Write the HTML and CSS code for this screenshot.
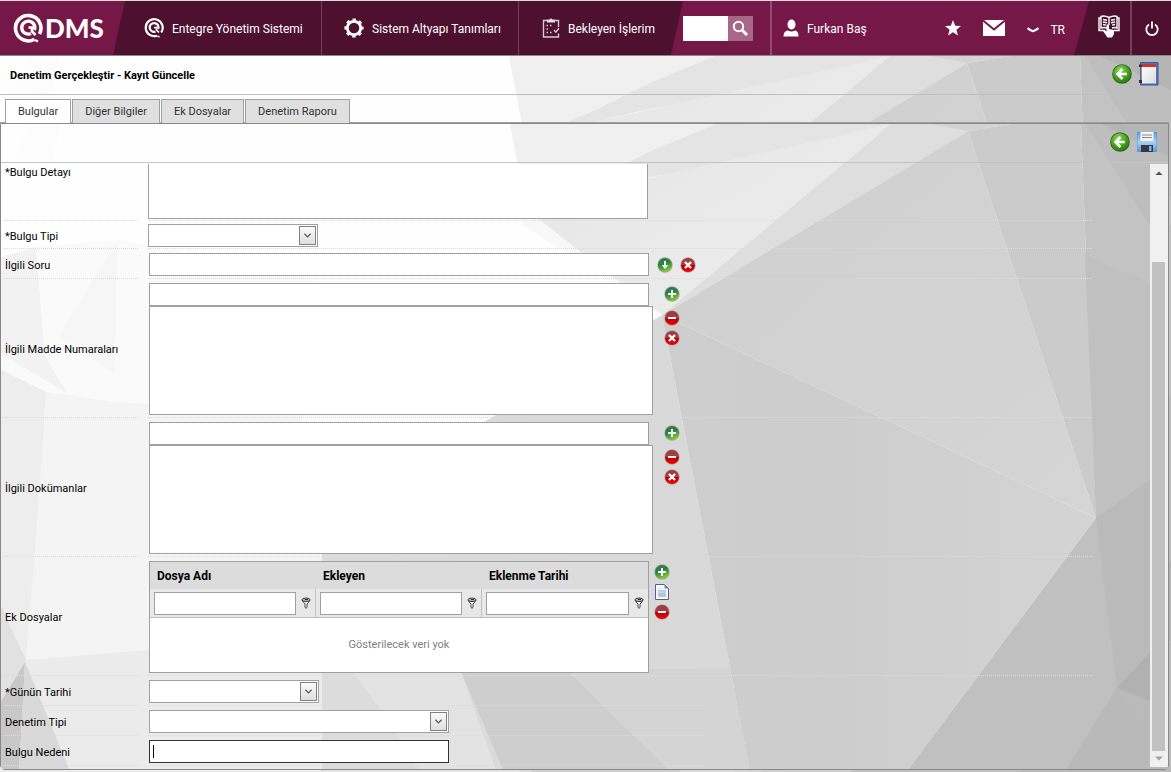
FILE: index.html
```html
<!DOCTYPE html>
<html lang="tr">
<head>
<meta charset="utf-8">
<title>QDMS - Denetim Gerçekleştir</title>
<link rel="stylesheet" href="styles.css">
</head>
<body>
<svg class="defs" width="0" height="0" aria-hidden="true">
  <defs>
    <linearGradient id="gGreen" x1="0" y1="0" x2="0.4" y2="1"><stop offset="0" stop-color="#2f7d55"/><stop offset=".5" stop-color="#2c8040"/><stop offset="1" stop-color="#7cc832"/></linearGradient>
    <linearGradient id="gRed" x1="0" y1="0" x2="0" y2="1"><stop offset="0" stop-color="#9c3a40"/><stop offset=".48" stop-color="#ae3a3e"/><stop offset=".52" stop-color="#b80008"/><stop offset="1" stop-color="#f80000"/></linearGradient>
    <radialGradient id="gBack" cx=".4" cy=".3" r=".8"><stop offset="0" stop-color="#93d860"/><stop offset=".5" stop-color="#4aa81f"/><stop offset="1" stop-color="#236b0c"/></radialGradient>
    <linearGradient id="gDisk" x1="0" y1="0" x2="0" y2="1"><stop offset="0" stop-color="#5c9bdc"/><stop offset=".5" stop-color="#a5d2f5"/><stop offset="1" stop-color="#5a97d6"/></linearGradient>
    <linearGradient id="gPaper" x1="0" y1="0" x2="1" y2="1"><stop offset="0" stop-color="#ffffff"/><stop offset="1" stop-color="#dcdcdc"/></linearGradient>
    <linearGradient id="gMid" x1="0" y1="0" x2="1" y2="1"><stop offset="0" stop-color="#e6e6e6"/><stop offset="1" stop-color="#ededed"/></linearGradient>
    <linearGradient id="gBig" x1="0" y1="0" x2="1" y2="1"><stop offset="0" stop-color="#cfcfcf"/><stop offset="1" stop-color="#d5d5d5"/></linearGradient>
    <linearGradient id="gLow" x1="0" y1="0" x2="1" y2="0"><stop offset="0" stop-color="#dcdcdc"/><stop offset="1" stop-color="#d8d8d8"/></linearGradient>
    <linearGradient id="gDeep" x1="0" y1="0" x2="1" y2="0"><stop offset="0" stop-color="#cecece"/><stop offset=".4" stop-color="#cdcdcd"/><stop offset="1" stop-color="#d4d4d4"/></linearGradient>
  </defs>
  <symbol id="facets" viewBox="0 0 1171 716" preserveAspectRatio="none">
    <rect width="1171" height="716" fill="#fefefe"/>
    <polygon points="60,0 50,40 12,38 30,0" fill="#fcfcfc"/>
    <polygon points="0,148 35,123 116,116 300,150 560,300 560,716 0,716" fill="#fafafa"/>
    <polygon points="0,133 35,123 44,232 66,269 0,230" fill="#f2f2f2"/>
    <polygon points="35,123 60,176 110,205 60,232 44,232" fill="#fafafa"/>
    <polygon points="116,117 58,212 114,250" fill="#f6f6f6"/>
    <polygon points="0,246 45,268 113,278 300,290 340,538 25,536 0,485" fill="#f4f4f4"/>
    <polygon points="0,246 45,268 36,400 25,536 0,482" fill="#ededed"/>
    <polygon points="25,536 160,525 330,510 330,716 0,716 0,560" fill="#ebebeb"/>
    <polygon points="0,482 25,536 0,580" fill="#e1e1e1"/>
    <polygon points="24,538 0,578 0,650 18,650" fill="#c8c8c8"/>
    <polygon points="24,538 18,650 70,650" fill="#d9d9d9"/>
    <polygon points="509,0 715,0 650,40 560,90 526,90" fill="#f0f0f0"/>
    <polygon points="715,0 890,0 890,10 650,53 540,78 600,52 650,27" fill="#e4e4e4"/>
    <polygon points="890,0 540,78 526,90 661,191" fill="url(#gMid)"/>
    <polygon points="526,86 661,191 520,100" fill="#f8f8f8"/>
    <polygon points="321,430 480,300 661,191 762,716 321,716" fill="url(#gLow)"/>
    <polygon points="321,545 350,545 459,545 520,716 321,716" fill="#e3e3e3"/>
    <polygon points="352,548 390,600 420,650 321,650 321,548" fill="#dcdcdc"/>
    <polygon points="459,545 565,545 670,648 680,716 532,716" fill="#cecece"/>
    <polygon points="565,545 729,545 762,716 735,716 670,648" fill="#d4d4d4"/>
    <polygon points="890,0 967,0 967,7 661,191" fill="#dedede"/>
    <polygon points="930,0 1010,0 967,7" fill="#d3d3d3"/>
    <polygon points="967,7 1095,394 661,191" fill="url(#gBig)"/>
    <polygon points="661,191 1095,394 905,648 850,716 762,716" fill="url(#gDeep)"/>
    <polygon points="967,7 1010,0 1080,0 1095,394" fill="#cbcbcb"/>
    <polygon points="1080,0 1171,0 1171,716 1095,394" fill="#c3c3c3"/>
    <polygon points="1085,0 1171,0 1171,140 1150,104" fill="#bebebe"/>
    <polygon points="1100,0 1171,0 1171,34" fill="#b5b5b5"/>
    <polygon points="1084,130 1171,170 1171,340 1095,394" fill="#c0c0c0"/>
    <polygon points="1095,394 1171,340 1171,716 1100,716" fill="#bababa"/>
    <polygon points="1095,394 1116,564 1060,716 850,716 905,648" fill="#c0c0c0"/>
    <polygon points="1116,564 1171,505 1171,585" fill="#b1b1b1"/>
    <polygon points="1116,564 1171,640 1171,716 1020,716" fill="#b9b9b9"/>
  </symbol>
  <symbol id="add" viewBox="0 0 16 16"><circle cx="8" cy="8" r="7.7" fill="#a9a9a9"/><circle cx="8" cy="8" r="7" fill="url(#gGreen)"/><path d="M8 4v8M4 8h8" stroke="#fff" stroke-width="2"/></symbol>
  <symbol id="down" viewBox="0 0 16 16"><circle cx="8" cy="8" r="7.7" fill="#a9a9a9"/><circle cx="8" cy="8" r="7" fill="url(#gGreen)"/><path d="M7 4h2v4h2.200L8 12 4.800 8H7z" fill="#fff"/></symbol>
  <symbol id="minus" viewBox="0 0 16 16"><circle cx="8" cy="8" r="7.7" fill="#a9a9a9"/><circle cx="8" cy="8" r="7" fill="url(#gRed)"/><path d="M4 8h8" stroke="#fff" stroke-width="2"/></symbol>
  <symbol id="cross" viewBox="0 0 16 16"><circle cx="8" cy="8" r="7.7" fill="#a9a9a9"/><circle cx="8" cy="8" r="7" fill="url(#gRed)"/><path d="M5 5l6 6M11 5l-6 6" stroke="#fff" stroke-width="2.400"/></symbol>
  <symbol id="back" viewBox="0 0 20 20"><circle cx="10" cy="10" r="9.800" fill="#2d5f1c"/><circle cx="10" cy="10" r="9" fill="url(#gBack)"/><path d="M15 10H7M10.500 5L5.500 10l5 5" fill="none" stroke="#fff" stroke-width="2.600"/></symbol>
  <symbol id="filter" viewBox="0 0 10 12"><path d="M1 3.500L4 7V10.500Q5 12 6 10.500V7L9 3.500" fill="#fff" stroke="#444"/><ellipse cx="5" cy="2.800" rx="4" ry="1.800" fill="#aaa" stroke="#444"/><path d="M4 2.500h3" stroke="#333"/></symbol>
  <symbol id="chev" viewBox="0 0 17 19"><path d="M5 7.500l3.500 3.500L12 7.500" fill="none" stroke="#555" stroke-width="1.300"/></symbol>
</svg>

<header class="topbar">
  <a class="brand" href="#" aria-label="QDMS">
    <svg width="31" height="31" viewBox="0 0 31 31" fill="none" stroke="#fff"><path d="M21.500 26.200A12.700 12.700 0 1 1 26.500 21" stroke-width="3.600"/><path d="M18 20.500A6.500 6.500 0 1 1 21.300 17" stroke-width="3.400"/><path d="M15.500 14.500h3.500v4l3.500 3.500" stroke-width="2.600"/><path d="M22 27l3 1.500" stroke-width="2.400"/></svg>
    <span>DMS</span>
  </a>
  <nav class="mainnav">
    <a href="#" class="nav-a">
      <svg width="20" height="20" viewBox="0 0 20 20" fill="none" stroke="#fff"><path d="M13 17.700A8.500 8.500 0 1 1 17.200 14.500" stroke-width="2.200"/><path d="M11.500 13.600A4.400 4.400 0 1 1 14.200 11" stroke-width="2.200"/><path d="M10 9.500h2.500v2.500l2.500 2.500" stroke-width="1.700"/><path d="M13.500 18l2 1" stroke-width="1.500"/></svg>
      Entegre Yönetim Sistemi</a>
    <a href="#" class="nav-b">
      <svg width="20" height="20" viewBox="0 0 20 20" fill="none" stroke="#fff"><circle cx="10" cy="10" r="6.700" stroke-width="2.800"/><circle cx="10" cy="10" r="8.600" stroke-width="2" stroke-dasharray="3.400 3.354" stroke-dashoffset="1.700"/></svg>
      Sistem Altyapı Tanımları</a>
    <a href="#" class="nav-c">
      <svg width="18" height="20" viewBox="0 0 18 20" fill="none" stroke="#d9c8d1" stroke-width="1.400"><path d="M5 2.500H1.500V19H16.500V15.500M16.500 9V2.500H13"/><path d="M5 1.500h2.500L9 .3l1.500 1.200H13V4.500H5z" fill="#e6dbe1" stroke="none"/><path d="M4.500 7.500H6M4.500 11H6M4.500 14.500H6M8 7.500h1.500M8 14.500h1.500M12 12l1.800 2.200 3.200-4"/></svg>
      Bekleyen İşlerim</a>
  </nav>
  <form class="search">
    <input type="text" aria-label="Ara">
    <button type="button" aria-label="Ara"><svg width="17" height="17" viewBox="0 0 17 17" fill="none" stroke="#fff"><circle cx="6.500" cy="6.500" r="4.700" stroke-width="2"/><path d="M10 10l5 5" stroke-width="3"/></svg></button>
  </form>
  <a class="user" href="#">
    <svg width="16" height="18" viewBox="0 0 16 18" fill="#fff"><ellipse cx="8.500" cy="5.500" rx="4" ry="5"/><path d="M.5 17.500Q.5 12 5 11.500Q8.500 13.500 12 11.500Q15.500 12 15.500 17.500z"/></svg>
    Furkan Baş</a>
  <div class="quick">
    <button type="button" aria-label="Favoriler"><svg width="16" height="16" viewBox="0 0 16 16" fill="#fff"><path d="M8 0l2.200 5.700 5.800.3-4.600 3.700L13 15.500 8 12.200 3 15.500l1.600-5.800L0 6l5.800-.3z"/></svg></button>
    <button type="button" aria-label="Mesajlar"><svg width="22" height="16" viewBox="0 0 22 16"><path d="M0 0h22v16H0z" fill="#fff"/><path d="M0 .5l11 9 11-9" fill="none" stroke="#751848" stroke-width="2"/></svg></button>
    <button type="button" class="lang"><svg width="12" height="6" viewBox="0 0 12 6"><path d="M.5 1Q2 3 6 4.200Q10 3 11.500 1" fill="none" stroke="#fff" stroke-width="2.200"/></svg>TR</button>
  </div>
  <div class="endnav">
    <button type="button" class="help" aria-label="Yardım"><svg width="22" height="24" viewBox="0 0 22 24" fill="none" stroke="#fff" stroke-width="1.400"><path d="M11 2.500Q6 0 3 1.500V13Q6 12 9 13M11 2.500Q16 0 19 1.500V13Q17 12 14 13M11 2.500V10M3 3H1v12.500h6M19 3h2v12.500h-5M5 4.500l4 .8M5 7l4 .8M5 9.500l3 .6M17 4.500l-4 .8M17 7l-4 .8M17 9.500l-3 .6"/><path d="M8.500 10Q10 8.500 11 10V14L16 15V19L14 22.500H9.500L5 16Q6.500 14.500 8.500 16.500z" fill="#fff" stroke="none"/></svg></button>
    <button type="button" class="power" aria-label="Çıkış"><svg width="14" height="15" viewBox="0 0 14 15" fill="none" stroke="#fff" stroke-width="1.800"><path d="M4 3.500A5.700 5.700 0 1 0 10 3.500M7 .5v7"/></svg></button>
  </div>
</header>

<main class="page">
  <svg class="backdrop"><use href="#facets"/></svg>
  <div class="titlebar">
    <h1>Denetim Gerçekleştir - Kayıt Güncelle</h1>
    <button type="button" aria-label="Geri"><svg width="20" height="20"><use href="#back"/></svg></button>
    <button type="button" aria-label="Not"><svg width="20" height="24" viewBox="0 0 20 24"><path d="M1.500.5h17.500v22.500H1.500z" fill="#5474b8" stroke="#3b5a99"/><path d="M2.500 2h14.500v19.500H2.500z" fill="url(#gPaper)"/><path d="M2.500 2h14.500v3H2.500z" fill="#cf3434"/><path d="M2 3v19" stroke="#777"/><path d="M0 2.500h3v2.500H0zM0 18h3v3H0z" fill="#333"/></svg></button>
  </div>
  <div class="tabs">
    <button type="button" class="tab active">Bulgular</button>
    <button type="button" class="tab">Diğer Bilgiler</button>
    <button type="button" class="tab">Ek Dosyalar</button>
    <button type="button" class="tab">Denetim Raporu</button>
  </div>
  <section class="panel">
    <svg class="backdrop"><use href="#facets"/></svg>
    <div class="toolbar">
      <button type="button" aria-label="Geri"><svg width="20" height="20"><use href="#back"/></svg></button>
      <button type="button" aria-label="Kaydet"><svg width="20" height="20" viewBox="0 0 20 20"><path d="M1 0h18l1 1v18l-1 1H1l-1-1V1z" fill="url(#gDisk)" stroke="#4f8acb" stroke-width=".8"/><path d="M3.500 0h13v9h-13z" fill="#f4f4f4"/><path d="M5 3h10M5 5.500h10" stroke="#888"/><path d="M4 13h12v7H4z" fill="#333a42"/><path d="M12 14h2.500v5H12z" fill="#7ab2ea"/></svg></button>
    </div>
    <div class="scroller">
      <form class="form">
        <div class="row r-detail"><label for="detay">*Bulgu Detayı</label><div class="field"><textarea id="detay" class="box detail"></textarea></div></div>
        <div class="row r-type"><label for="tip">*Bulgu Tipi</label><div class="field"><div class="combo short"><select id="tip"><option></option></select><svg width="17" height="19"><use href="#chev"/></svg></div></div></div>
        <div class="row r-std"><label for="soru">İlgili Soru</label><div class="field in"><input id="soru" class="box wide" type="text"><div class="side-h"><button type="button" aria-label="Seç"><svg width="16" height="16"><use href="#down"/></svg></button><button type="button" aria-label="Temizle"><svg width="16" height="16"><use href="#cross"/></svg></button></div></div></div>
        <div class="row r-list"><label for="madde">İlgili Madde Numaraları</label><div class="field in"><div class="stack"><input id="madde" class="box wide" type="text"><select class="box list" multiple aria-label="Madde listesi"></select></div><div class="side"><button type="button" class="first" aria-label="Ekle"><svg width="16" height="16"><use href="#add"/></svg></button><button type="button" aria-label="Çıkar"><svg width="16" height="16"><use href="#minus"/></svg></button><button type="button" aria-label="Temizle"><svg width="16" height="16"><use href="#cross"/></svg></button></div></div></div>
        <div class="row r-list"><label for="dok">İlgili Dokümanlar</label><div class="field in"><div class="stack"><input id="dok" class="box wide" type="text"><select class="box list" multiple aria-label="Doküman listesi"></select></div><div class="side"><button type="button" class="first" aria-label="Ekle"><svg width="16" height="16"><use href="#add"/></svg></button><button type="button" aria-label="Çıkar"><svg width="16" height="16"><use href="#minus"/></svg></button><button type="button" aria-label="Temizle"><svg width="16" height="16"><use href="#cross"/></svg></button></div></div></div>
        <div class="row r-files"><span class="lbl">Ek Dosyalar</span><div class="field in">
          <table class="grid">
            <thead>
              <tr><th>Dosya Adı</th><th>Ekleyen</th><th>Eklenme Tarihi</th></tr>
              <tr class="filters">
                <td><div><input class="box" type="text" aria-label="Dosya Adı filtresi"><svg width="10" height="12"><use href="#filter"/></svg></div></td>
                <td><div><input class="box" type="text" aria-label="Ekleyen filtresi"><svg width="10" height="12"><use href="#filter"/></svg></div></td>
                <td><div><input class="box" type="text" aria-label="Eklenme Tarihi filtresi"><svg width="10" height="12"><use href="#filter"/></svg></div></td>
              </tr>
            </thead>
            <tbody><tr><td class="empty" colspan="3">Gösterilecek veri yok</td></tr></tbody>
          </table>
          <div class="side near"><button type="button" aria-label="Ekle"><svg width="16" height="16"><use href="#add"/></svg></button><button type="button" aria-label="Görüntüle"><svg width="16" height="16" viewBox="0 0 16 16"><path d="M1.500.5h9l4 4v11h-13z" fill="#f4f8ff" stroke="#55657e"/><path d="M10.500.5v4h4z" fill="#6b86ad"/><path d="M4 6h8v7H4z" fill="#b4c2de"/><path d="M3.500 4.500h5M4 8h8" stroke="#d7e2f4"/></svg></button><button type="button" aria-label="Sil"><svg width="16" height="16"><use href="#minus"/></svg></button></div>
        </div></div>
        <div class="row r-std narrow"><label for="gun">*Günün Tarihi</label><div class="field in"><div class="combo short"><select id="gun"><option></option></select><svg width="17" height="19"><use href="#chev"/></svg></div></div></div>
        <div class="row r-std narrow"><label for="den">Denetim Tipi</label><div class="field in"><div class="combo mid"><select id="den"><option></option></select><svg width="17" height="19"><use href="#chev"/></svg></div></div></div>
        <div class="row r-std narrow"><label for="neden">Bulgu Nedeni</label><div class="field in"><div class="focusbox"><input id="neden" class="box" type="text"><i></i></div></div></div>
      </form>
      <div class="bar" aria-hidden="true">
        <svg width="18" height="18" viewBox="0 0 18 18"><path d="M5.500 11L9 7.500 12.500 11z" fill="#505050"/></svg>
        <div class="track"><div class="thumb"></div></div>
        <svg width="18" height="16" viewBox="0 0 18 16"><path d="M5 5.500h8L9 9.500z" fill="#a3a3a3"/></svg>
      </div>
    </div>
  </section>
</main>
</body>
</html>
```
FILE: styles.css
```css
* { box-sizing: border-box; }
body { margin: 0; min-height: 100vh; display: flex; flex-direction: column; font: 11px/16px Roboto, "Open Sans", sans-serif; color: #000; background: #ccc; }
button { border: 0; padding: 0; background: none; color: inherit; font: inherit; display: flex; align-items: center; }
input, select, textarea { font: inherit; margin: 0; outline: 0; }
svg { display: block; flex: none; }
.defs { position: absolute; }

.topbar { display: flex; height: 56px; border-top: 1px solid #ddd; border-bottom: 1px solid #888; background: #751848; color: #fff; font-size: 12px; }
.topbar a { color: inherit; text-decoration: none; display: flex; align-items: center; white-space: nowrap; }
.topbar .brand { width: 113px; padding: 0 0 0 13px; gap: 1px; font: 900 26px/30px Lato, sans-serif; }
.mainnav { display: flex; width: 570px; background: #4e102f; clip-path: polygon(12px 0, 100% 0, calc(100% - 12px) 100%, 0 100%); }
.topbar .mainnav a, .topbar .user { gap: 8px; padding-top: 2px; }
.mainnav .nav-a { width: 209px; padding-left: 31px; border-right: 1px solid #754059; }
.mainnav .nav-b { width: 197px; padding-left: 22px; border-right: 1px solid #754059; }
.mainnav .nav-c { padding-left: 23px; }
.mainnav svg, .user svg { margin-bottom: 2px; }
.search { display: flex; align-items: center; width: 89px; border-right: 2px solid #954a70; }
.search input { width: 45px; height: 25px; border: 0; background: #fff; }
.search button { width: 25px; height: 25px; justify-content: center; background: #a66788; }
.user { flex: 1; padding-left: 11px; }
.quick { display: flex; align-items: center; gap: 22px; padding-right: 9px; }
.quick .lang { gap: 11px; padding-top: 4px; }
.endnav { display: flex; width: 97px; background: #4e102f; clip-path: polygon(15px 0, 100% 0, 100% 100%, 0 100%); }
.help { width: 58px; padding: 0 0 2px 24px; border-right: 2px solid #754059; }
.power { flex: 1; justify-content: center; }

.page { position: relative; flex: 1; display: flex; flex-direction: column; padding: 0 2px 2px 0; overflow: hidden; }
.backdrop { position: absolute; top: 0; left: 0; width: 100%; height: 716px; }
.panel .backdrop { width: calc(100% + 4px); }
.titlebar, .tabs, .toolbar, .scroller { position: relative; }
.titlebar { display: flex; align-items: center; gap: 7px; height: 39px; padding: 0 10px 2px; border-bottom: 1px solid #bfbfbf; }
.titlebar h1 { margin: 0; padding-top: 4px; flex: 1; font-size: 11px; line-height: 16px; font-weight: 700; }
.tabs { display: flex; gap: 1px; padding: 4px 5px 0; height: 28px; border-bottom: 1px solid #a0a0a0; }
.tab { height: 24px; padding: 0 12px; border: 1px solid #a0a0a0; border-bottom: 0; background: #e0e0e0; color: #333; }
.tab.active { background: #fff; margin-bottom: -1px; }
.panel { position: relative; flex: 1; display: flex; flex-direction: column; border: 1px solid #888; border-radius: 0 0 5px 5px; overflow: hidden; }
.toolbar { display: flex; justify-content: flex-end; align-items: center; gap: 7px; height: 39px; padding: 0 11px 2px 0; border-bottom: 1px solid #c3c3c3; }
.scroller { flex: 1; display: flex; padding: 1px 0 2px; }
.form { flex: 1; padding-right: 58px; }
.bar { width: 18px; display: flex; flex-direction: column; background: #f0f0f0; }
.track { flex: 1; display: flex; padding: 80px 3px 0 2px; }
.thumb { flex: 1; background: #c1c1c1; }

.row { display: grid; grid-template-columns: 134px 1fr; gap: 10px; padding-left: 3px; }
.row > * { border-bottom: 1px dotted #dcdcdc; }
.row > label, .lbl { display: flex; align-items: center; padding: 4px 0 0 1px; white-space: nowrap; }
.row.narrow { max-width: 702px; }
.field { display: flex; align-items: center; padding-top: 2px; }
.field.in { padding-left: 1px; }
.box { border: 1px solid #a0a0a0; border-radius: 0; background: #fff; padding: 2px 3px; }
.wide { width: 500px; height: 23px; }
.r-detail { height: 57px; }
.r-detail .field { padding-top: 0; align-items: flex-start; }
.r-detail > label { padding-top: 1px; align-items: flex-start; }
.detail { width: 500px; height: 55px; border-top: 0; resize: none; }
.r-type { height: 28px; }
.r-std { height: 30px; }
.combo { position: relative; height: 23px; }
.combo.short { width: 170px; }
.combo.mid { width: 300px; }
.combo select { appearance: none; width: 100%; height: 100%; border: 1px solid #a0a0a0; border-radius: 0; background: #fff; }
.combo svg { position: absolute; top: 2px; right: 2px; border: 1px solid #808080; background: linear-gradient(#fafafa, #dedede); pointer-events: none; }
.side-h { display: flex; gap: 7px; padding-left: 8px; }
.r-list { height: 139px; }
.stack { display: flex; flex-direction: column; }
.list { width: 504px; height: 109px; overflow: hidden; }
.side { align-self: flex-start; display: flex; flex-direction: column; gap: 4px; padding: 5px 0 0 11px; }
.side .first { margin-bottom: 4px; }
.side.near { padding-left: 5px; }
.r-files { height: 119px; }
.grid { width: 500px; height: 112px; table-layout: fixed; border: 1px solid #a0a0a0; border-spacing: 0; background: #fff; }
.grid th { height: 27px; padding: 0 0 0 7px; text-align: left; font-size: 12px; background: #dcdcdc; }
.grid td { padding: 0; }
.filters td { height: 29px; background: #e8e8e8; border-right: 1px solid #c0c0c0; border-bottom: 1px solid #c0c0c0; }
.filters td:last-child { border-right: 0; }
.filters div { display: flex; align-items: center; gap: 5px; padding: 0 4px; }
.filters input { flex: 1; min-width: 0; height: 23px; }
.grid .empty { text-align: center; color: #808080; }
.focusbox { position: relative; width: 300px; height: 23px; }
.focusbox input { width: 100%; height: 23px; border-color: #333; }
.focusbox i { position: absolute; left: 4px; top: 5px; width: 1px; height: 13px; background: #000; }
```
